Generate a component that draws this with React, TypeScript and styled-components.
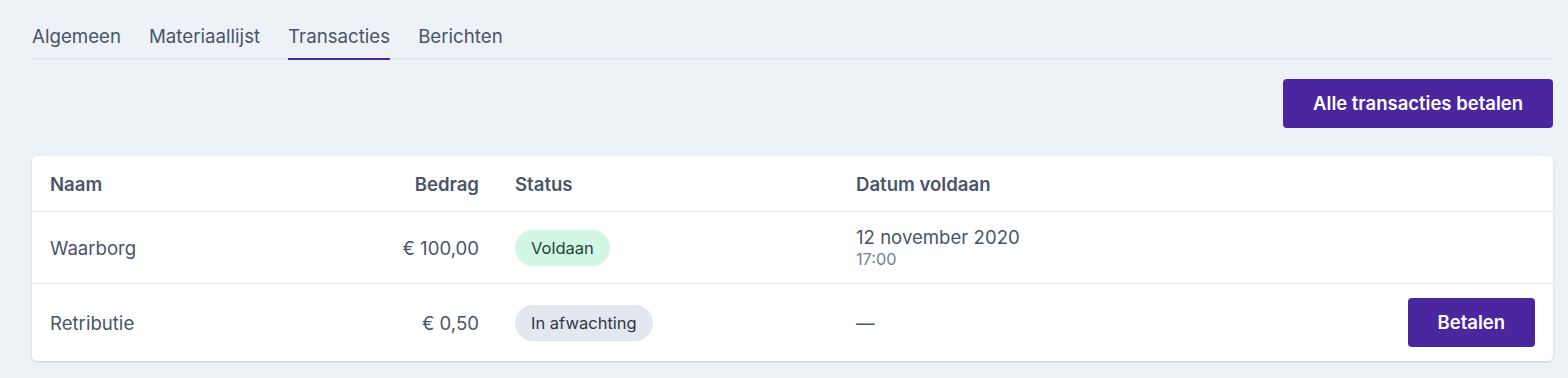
import { createGlobalStyle, styled } from "styled-components";

const GlobalStyle = createGlobalStyle`
  html, body {
    margin: 0;
    padding: 0;
    background: #edf2f7;
    font-family: Inter, "Noto Sans", sans-serif;
    color: #4a5568;
  }
`;

const tabs = ["Algemeen", "Materiaallijst", "Transacties", "Berichten"];

const transactions = [
  {
    name: "Waarborg",
    amount: "€ 100,00",
    status: "Voldaan",
    paid: true,
    date: "12 november 2020",
    time: "17:00",
  },
  {
    name: "Retributie",
    amount: "€ 0,50",
    status: "In afwachting",
    paid: false,
    date: null,
    time: null,
  },
];

export default function App() {
  return (
    <>
      <GlobalStyle />
      <Page>
        <TabList>
          {tabs.map((tab) => (
            <Tab key={tab} $active={tab === "Transacties"}>
              {tab}
            </Tab>
          ))}
        </TabList>

        <Toolbar>
          <PrimaryButton>Alle transacties betalen</PrimaryButton>
        </Toolbar>

        <Card>
          <HeaderRow>
            <HeadCell>Naam</HeadCell>
            <HeadCell $right>Bedrag</HeadCell>
            <HeadCell>Status</HeadCell>
            <HeadCell>Datum voldaan</HeadCell>
            <HeadCell />
          </HeaderRow>
          {transactions.map((t) => (
            <Row key={t.name}>
              <Cell>{t.name}</Cell>
              <Cell $right>{t.amount}</Cell>
              <Cell>
                <Badge $paid={t.paid}>{t.status}</Badge>
              </Cell>
              <Cell>
                {t.date ? (
                  <DateBlock>
                    <span>{t.date}</span>
                    <Time>{t.time}</Time>
                  </DateBlock>
                ) : (
                  <Dash>—</Dash>
                )}
              </Cell>
              <Cell $right>
                {!t.paid && <PrimaryButton>Betalen</PrimaryButton>}
              </Cell>
            </Row>
          ))}
        </Card>
      </Page>
    </>
  );
}

const Page = styled.div`
  padding: 25px 15px 16px 32px;
`;

const TabList = styled.div`
  display: flex;
  gap: 28px;
  border-bottom: 2px solid #e2e8f0;
`;

const Tab = styled.div<{ $active?: boolean }>`
  font-size: 18.7px;
  line-height: 24px;
  padding-bottom: 9px;
  margin-bottom: -2px;
  color: #4a5568;
  border-bottom: 2px solid ${(p) => (p.$active ? "#4c27a1" : "transparent")};
  cursor: pointer;
`;

const Toolbar = styled.div`
  display: flex;
  justify-content: flex-end;
  margin-top: 19px;
  margin-bottom: 28px;
`;

const PrimaryButton = styled.button`
  font-family: Inter, "Noto Sans", sans-serif;
  font-size: 18.5px;
  font-weight: 600;
  line-height: 25px;
  padding: 12px 30px;
  color: #ffffff;
  background: #4a269f;
  border: none;
  border-radius: 4px;
  cursor: pointer;
`;

const Card = styled.div`
  background: #ffffff;
  border-radius: 5px;
  box-shadow: 0 1px 3px rgba(0, 0, 0, 0.1), 0 1px 2px rgba(0, 0, 0, 0.06);
  overflow: hidden;
`;

const gridColumns = "230px 235px 341px 1fr auto";

const HeaderRow = styled.div`
  display: grid;
  grid-template-columns: ${gridColumns};
  height: 55px;
  align-items: center;
`;

const Row = styled.div`
  display: grid;
  grid-template-columns: ${gridColumns};
  align-items: center;
  padding: 14px 0;
  border-top: 1px solid #e2e8f0;
`;

const HeadCell = styled.div<{ $right?: boolean }>`
  padding: 0 18px;
  font-size: 18.6px;
  font-weight: 600;
  color: #4a5568;
  text-align: ${(p) => (p.$right ? "right" : "left")};
`;

const Cell = styled.div<{ $right?: boolean }>`
  padding: 0 18px;
  font-size: 18.6px;
  color: #4a5568;
  text-align: ${(p) => (p.$right ? "right" : "left")};
`;

const Badge = styled.span<{ $paid: boolean }>`
  display: inline-block;
  padding: 0 16px;
  line-height: 36px;
  border-radius: 18px;
  font-size: 16.5px;
  background: ${(p) => (p.$paid ? "#d1f7e4" : "#e2e8f0")};
  color: ${(p) => (p.$paid ? "#1c4532" : "#2d3748")};
`;

const DateBlock = styled.div`
  display: flex;
  flex-direction: column;
  line-height: 23px;
`;

const Time = styled.span`
  font-size: 16.3px;
  line-height: 20px;
  color: #718096;
`;

const Dash = styled.span`
  color: #4a5568;
`;
